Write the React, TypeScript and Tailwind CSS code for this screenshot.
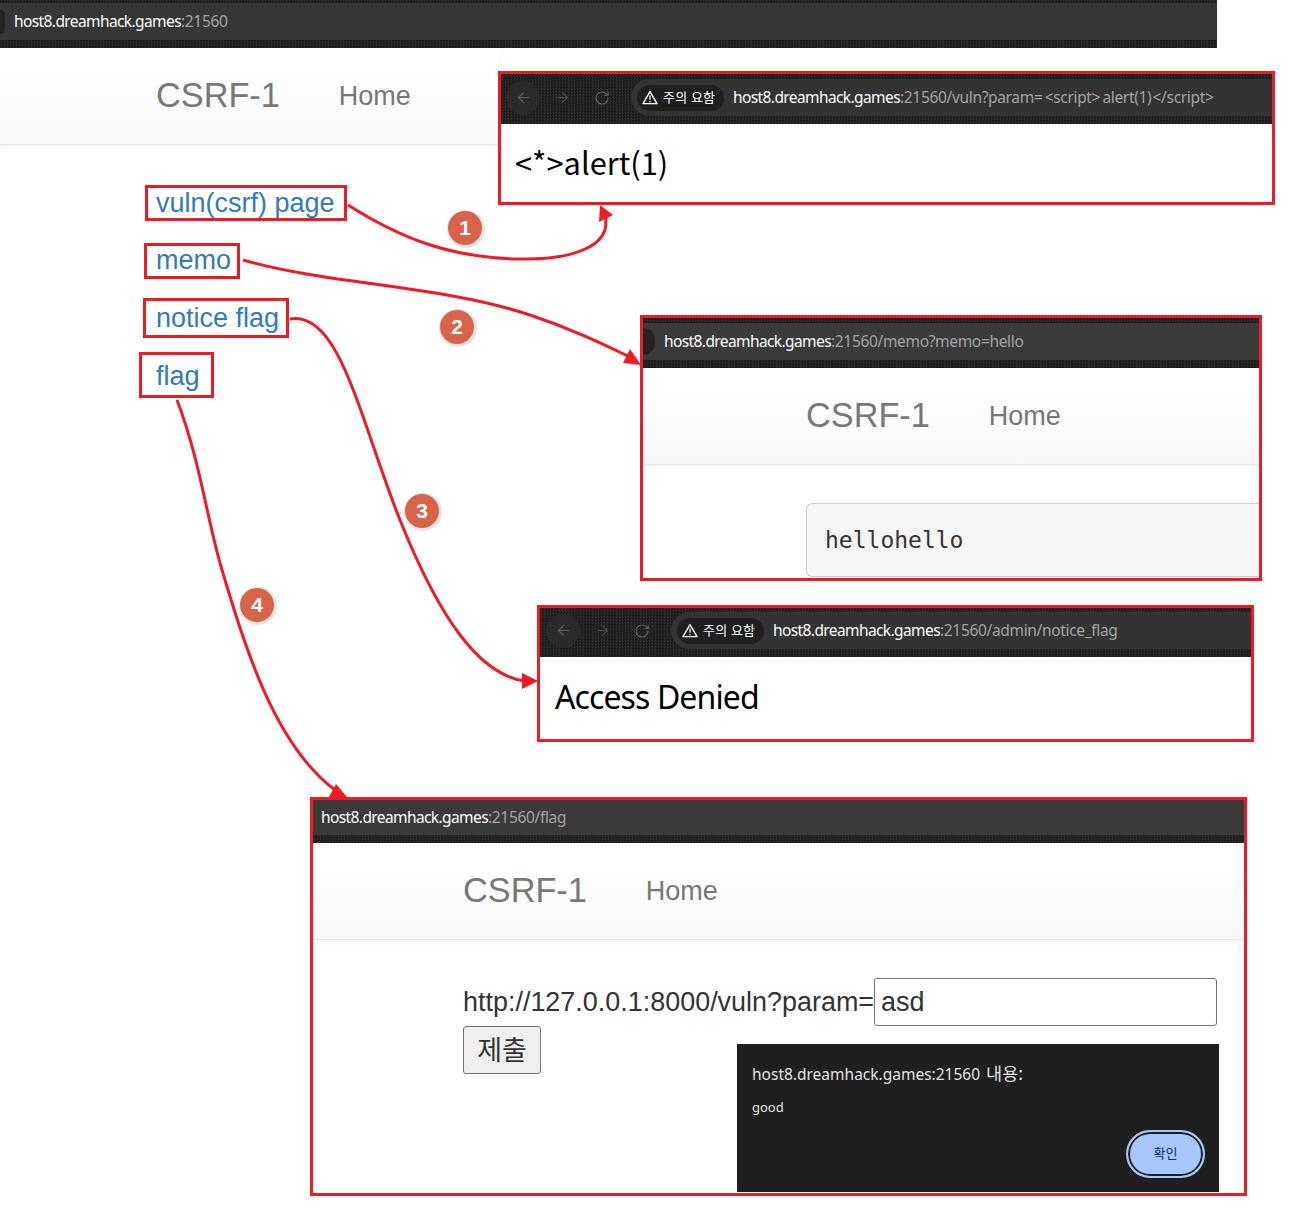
import type { ReactNode } from 'react'
import { ArrowLeft, ArrowRight, RotateCw } from 'lucide-react'

const ARIAL = 'font-["Liberation_Sans",Arial,sans-serif]'
const UI = 'font-["Noto_Sans","Noto_Sans_CJK_KR",sans-serif]'

function Url({ path }: { path: string }) {
  return (
    <span className={`${UI} text-[15.5px] tracking-[-0.6px] whitespace-nowrap text-white`}>
      host8.dreamhack.games<span className="tracking-[-0.33px] text-[#a3a3a3]">{path}</span>
    </span>
  )
}

function WarnIcon() {
  return (
    <svg width="16" height="15" viewBox="0 0 16 15" className="shrink-0">
      <path d="M8 1.6 15 13.6 H1 Z" fill="none" stroke="#fff" strokeWidth="1.4" strokeLinejoin="round" />
      <path d="M8 5.6 V9.8 M8 10.9 V12.2" stroke="#fff" strokeWidth="1.3" />
    </svg>
  )
}

// dark browser toolbar with the back/forward buttons and the warning chip
function Toolbar({ path, size }: { path: string; size: string }) {
  return (
    <div className={`flex shrink-0 items-start bg-[repeating-conic-gradient(#2a2a2a_0_25%,#1a1a1a_0_50%)] bg-size-[3px_3px] ${size}`}>
      <div className="flex h-[37px] items-center">
        <div className="flex h-[34px] w-[34px] items-center justify-center rounded-full bg-[#2a2a2a]">
          <ArrowLeft size={17} strokeWidth={1.6} className="text-[#5e5e5e]" />
        </div>
        <ArrowRight size={17} strokeWidth={1.6} className="ml-[14px] text-[#4a4a4a]" />
        <RotateCw size={16} strokeWidth={1.8} className="ml-[23px] text-[#5e5e5e]" />
      </div>
      <div className="ml-[21px] flex h-[37px] flex-1 items-center rounded-l-full bg-[#333333] pl-[6px]">
        <div className="flex h-[26px] w-[87px] items-center gap-[5px] rounded-full bg-[#1f1f1f] pl-[5px]">
          <WarnIcon />
          <span className={`${UI} text-[13px] tracking-[0.2px] whitespace-nowrap text-white`}>주의 요함</span>
        </div>
        <div className="ml-[9px]">
          <Url path={path} />
        </div>
      </div>
    </div>
  )
}

function AddressBar({ path, chip, top, bar }: { path: string; chip: boolean; top: boolean; bar: string }) {
  return (
    <div className="flex shrink-0 flex-col bg-[repeating-conic-gradient(#2a2a2a_0_25%,#1a1a1a_0_50%)] bg-size-[3px_3px]">
      {top && <div className="h-[5px]" />}
      <div className={`flex items-center bg-[#3a3a3a] ${bar}`}>
        {chip ? (
          <div className="mr-[9px] flex h-[27px] w-[12px] items-center justify-end rounded-r-full bg-[#232323]" />
        ) : (
          <div className="w-[8px]" />
        )}
        <Url path={path} />
      </div>
      <div className="h-[8px]" />
    </div>
  )
}

function NavBar({ pad }: { pad: string }) {
  return (
    <nav className={`flex h-[97px] shrink-0 items-center gap-[59px] border-b border-[#e7e7e7] bg-linear-to-b from-white from-20% to-[#f8f8f8] shadow-[0_2px_5px_rgba(0,0,0,0.05)] ${pad} ${ARIAL}`}>
      <span className="pb-[1px] text-[34.3px] text-[#777777]">CSRF-1</span>
      <span className="text-[27px] text-[#777777]">Home</span>
    </nav>
  )
}

function Badge({ n, className }: { n: number; className: string }) {
  return (
    <div className={`absolute flex h-[34px] w-[34px] items-center justify-center rounded-full bg-[#d9634a] shadow-[1px_1px_0_2px_#e4e4e4] ${ARIAL} text-[21px] font-bold text-white ${className}`}>
      {n}
    </div>
  )
}

function Frame({ className, children }: { className: string; children: ReactNode }) {
  return <section className={`absolute flex flex-col overflow-hidden border-3 border-[#ed1c24] bg-white ${className}`}>{children}</section>
}

const links = [
  { label: 'vuln(csrf) page', box: 'top-[1.5px] -left-[11px] w-[202px] h-[36px]' },
  { label: 'memo', box: 'top-[1.5px] -left-[12px] w-[96px] h-[36px]' },
  { label: 'notice flag', box: '-top-[0.5px] -left-[13px] w-[146px] h-[40px]' },
  { label: 'flag', box: '-top-[4.5px] -left-[17px] w-[75px] h-[46px]' },
]

export default function App() {
  return (
    <div className="relative h-[1214px] w-[1294px] overflow-hidden bg-white">
      {/* base page */}
      <div className="w-[1217px]">
        <div className="flex flex-col bg-[repeating-conic-gradient(#2a2a2a_0_25%,#1a1a1a_0_50%)] bg-size-[3px_3px]">
          <div className="h-[3px]" />
          <div className="flex h-[37px] items-center bg-[#363636]">
            <div className="mr-[9px] h-[24px] w-[5px] rounded-r-full bg-[#232323]" />
            <Url path=":21560" />
          </div>
          <div className="h-[8px]" />
        </div>
      </div>
      <div className="w-[500px]">
        <NavBar pad="pl-[156px]" />
      </div>
      <ul className={`flex flex-col gap-[18.7px] pt-[38.5px] pl-[156px] ${ARIAL} text-[27px] leading-[39px] text-[#337ab7]`}>
        {links.map((l) => (
          <li key={l.label} className="relative h-[39px]">
            {l.label}
            <div className={`absolute border-3 border-[#ed1c24] ${l.box}`} />
          </li>
        ))}
      </ul>

      {/* pasted screenshots */}
      <Frame className="top-[71px] left-[498px] h-[134px] w-[777px]">
        <Toolbar size="h-[50px] pt-[5px] pl-[5px]" path={':21560/vuln?param=\u2009<script>\u2009alert(1)\u200a</script>'} />
        <div className={`pt-[15px] pl-[14px] font-["Noto_Sans_CJK_KR",sans-serif] text-[30.8px] leading-[46px] text-black`}>{'<*>alert(1)'}</div>
      </Frame>

      <Frame className="top-[315px] left-[640px] h-[266px] w-[622px]">
        <AddressBar path=":21560/memo?memo=hello" chip top bar="h-[37px]" />
        <NavBar pad="pl-[163px]" />
        <div className="pt-[38px] pl-[163px]">
          <pre className="flex h-[74px] items-center rounded-l-[6px] border border-r-0 border-[#cccccc] bg-[#f5f5f5] pt-[1px] pl-[18px] font-['DejaVu_Sans_Mono',monospace] text-[23px] text-[#333333]">hellohello</pre>
        </div>
      </Frame>

      <Frame className="top-[605px] left-[537px] h-[137px] w-[717px]">
        <Toolbar size="h-[49px] pt-[4px] pl-[6px]" path=":21560/admin/notice_flag" />
        <div className={`${UI} pt-[18px] pl-[15px] text-[32px] leading-[44px] tracking-[-0.9px] text-black`}>Access Denied</div>
      </Frame>

      <Frame className="top-[797px] left-[310px] h-[399px] w-[937px]">
        <AddressBar path=":21560/flag" chip={false} top={false} bar="h-[35px]" />
        <NavBar pad="pl-[150px]" />
        <form className={`flex flex-col items-start pt-[38px] pl-[150px] ${ARIAL} text-[26.95px] text-[#333333]`}>
          <div className="flex items-center">
            <span>http://127.0.0.1:8000/vuln?param=</span>
            <div className="flex h-[48px] w-[343px] items-center rounded-[3px] border border-[#767676] pl-[6px] text-[#333333]">asd</div>
          </div>
          <button type="button" className="flex h-[48px] w-[78px] items-center justify-center rounded-[3px] border border-[#767676] bg-[#efefef] pb-[2px] font-['Noto_Sans_CJK_KR',sans-serif] text-[27px] text-[#333333]">
            제출
          </button>
        </form>
      </Frame>

      {/* alert dialog */}
      <div className={`absolute top-[1044px] left-[737px] flex h-[148px] w-[482px] flex-col bg-[#1f1f1f] pt-[17px] pr-[14px] pl-[15px] ${UI}`}>
        <div className="text-[15.5px] leading-[24px] text-[#e3e3e3]">
          host8.dreamhack.games:21560 <span className="ml-[2px] text-[17.5px]">내용:</span>
        </div>
        <div className="mt-[12px] text-[13px] leading-[18px] text-[#e3e3e3]">good</div>
        <div className="mt-[14px] flex justify-end">
          <div className="flex h-[48px] w-[79px] items-center justify-center rounded-full border-2 border-[#a8c7fa] bg-[#a8c7fa] text-[13px] text-[#062e6f] shadow-[inset_0_0_0_2px_#1f1f1f]">확인</div>
        </div>
      </div>

      {/* annotation arrows */}
      <svg className="pointer-events-none absolute top-0 left-0" width="1294" height="1214" fill="none">
        <g stroke="#ed1c24" strokeWidth="3">
          <path d="M348 205 C 400 238 450 258 520 259 C 575 260 612 245 605 216" />
          <path d="M243 260 C 330 285 440 285 530 315 C 575 330 605 345 630 357" />
          <path d="M290 319 C 340 310 360 420 400 520 C 440 620 480 675 525 681" />
          <path d="M177 400 C 200 460 207 520 222 570 C 246 650 275 745 335 790" />
        </g>
        <g fill="#ed1c24">
          <path d="M600 205 L613 215 L599 222 Z" />
          <path d="M641 365 L630 349 L623 363 Z" />
          <path d="M538 681 L522 673 L522 689 Z" />
          <path d="M347 797 L336 784 L329 797 Z" />
        </g>
      </svg>
      <Badge n={1} className="top-[211px] left-[448px]" />
      <Badge n={2} className="top-[310px] left-[440px]" />
      <Badge n={3} className="top-[494px] left-[405px]" />
      <Badge n={4} className="top-[588px] left-[240px]" />
    </div>
  )
}
